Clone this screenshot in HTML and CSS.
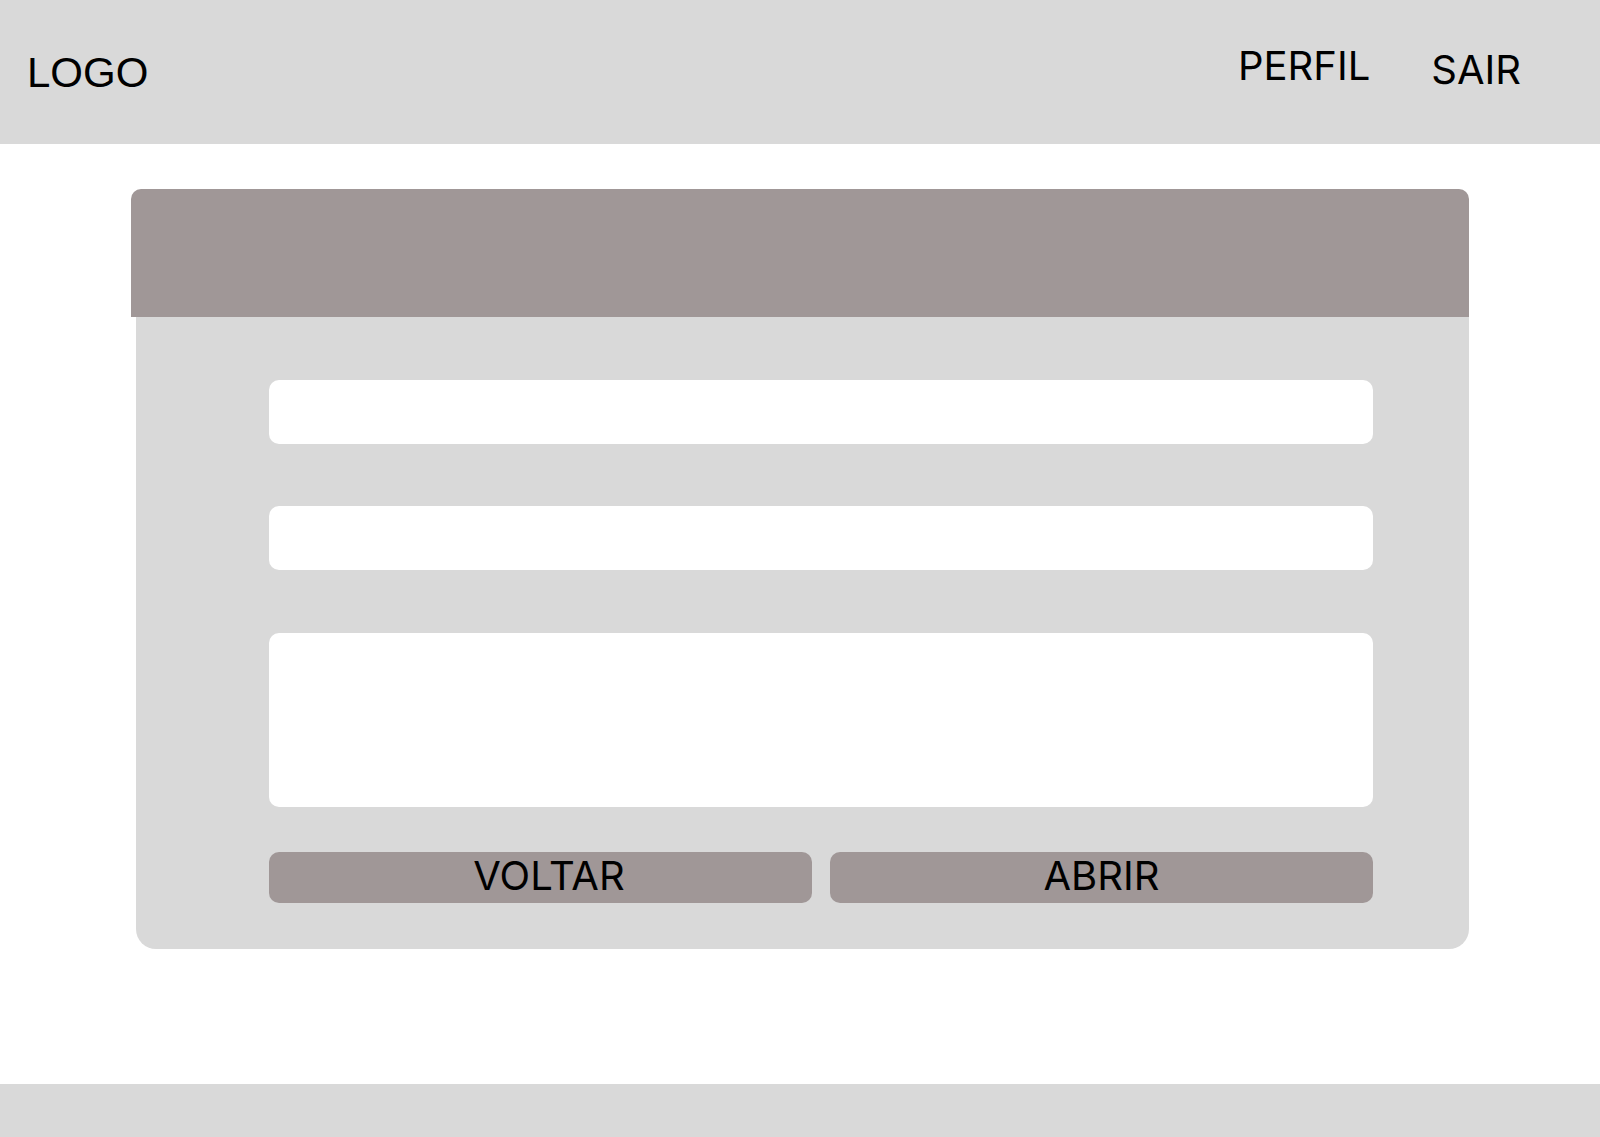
FILE: index.html
```html
<!DOCTYPE html>
<html lang="pt">
<head>
<meta charset="utf-8">
<title>Abrir</title>
<link rel="stylesheet" href="styles.css">
</head>
<body>
  <header class="topbar">
    <div class="logo">LOGO</div>
    <nav class="nav">
      <a class="nav-link nav-perfil" href="#">PERFIL</a>
      <a class="nav-link nav-sair" href="#">SAIR</a>
    </nav>
  </header>
  <main class="main">
    <section class="card">
      <div class="card-head"></div>
      <div class="card-body">
        <div class="field"></div>
        <div class="field"></div>
        <div class="field field-area"></div>
        <div class="actions">
          <button class="btn btn-back" type="button">VOLTAR</button>
          <button class="btn" type="button">ABRIR</button>
        </div>
      </div>
    </section>
  </main>
  <footer class="footer"></footer>
</body>
</html>
```

FILE: styles.css
```css
* { box-sizing: border-box; }
html, body { margin: 0; padding: 0; }
body {
  min-height: 100vh;
  display: flex;
  flex-direction: column;
  background: #ffffff;
  font-family: "Inter", "Liberation Sans", sans-serif;
  color: #000;
}
.topbar {
  height: 144px;
  background: #d9d9d9;
  display: flex;
  justify-content: space-between;
  align-items: flex-start;
  padding: 0 79px 0 27px;
  flex-shrink: 0;
}
.logo {
  font-family: "Liberation Sans", Arial, sans-serif;
  font-size: 42px;
  line-height: 1;
  margin-top: 52px;
}
.nav {
  display: flex;
  align-items: flex-start;
  gap: 61px;
}
.nav-link {
  font-family: "Inter", sans-serif;
  font-size: 40px;
  line-height: 1;
  color: #000;
  text-decoration: none;
}
.nav-perfil { margin-top: 46px; }
.nav-sair { margin-top: 50px; }
.main {
  flex: 1;
  display: flex;
  justify-content: center;
  align-items: flex-start;
  padding-top: 45px;
}
.card {
  width: 1338px;
  display: flex;
  flex-direction: column;
}
.card-head {
  height: 128px;
  background: #a09797;
  border-radius: 10px 10px 0 0;
}
.card-body {
  margin-left: 5px;
  background: #d9d9d9;
  border-radius: 0 0 20px 20px;
  padding: 63px 96px 46px 133px;
  display: flex;
  flex-direction: column;
}
.field {
  height: 64px;
  background: #ffffff;
  border-radius: 10px;
  margin-bottom: 62px;
}
.field-area {
  height: 174px;
  margin-top: 1px;
  margin-bottom: 45px;
}
.actions {
  display: grid;
  grid-template-columns: 1fr 1fr;
  gap: 18px;
}
.btn {
  height: 51px;
  border: 0;
  border-radius: 10px;
  background: #a09797;
  font-family: "Inter", sans-serif;
  font-size: 40px;
  line-height: 1;
  color: #000;
  padding: 0 0 3px 0;
  display: flex;
  align-items: center;
  justify-content: center;
}
.btn-back { padding-left: 17px; }
.footer {
  height: 53px;
  background: #d9d9d9;
  flex-shrink: 0;
}
```
